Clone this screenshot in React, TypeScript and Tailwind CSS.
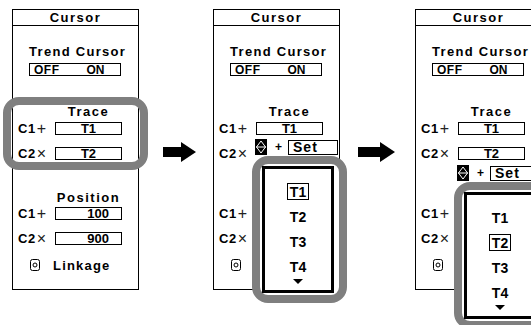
import React from 'react';

type Variant = 1 | 2 | 3;

function Arrow({ width }: { width: number }) {
  const neck = width - 15;
  return (
    <svg width={width} height={20} viewBox={`0 0 ${width} 20`} className="shrink-0">
      <polygon points={`0,5 ${neck},5 ${neck},0 ${width},10 ${neck},20 ${neck},15 0,15`} fill="#000" />
    </svg>
  );
}

function Spinner() {
  return (
    <svg width={12} height={16} viewBox="0 0 12 16" className="shrink-0">
      <rect x={0} y={0} width={12} height={16} fill="#000" />
      <polygon points="6,2 10.5,8 6,14 1.5,8" fill="none" stroke="#fff" strokeWidth={1} />
      <line x1={1} y1={8} x2={11} y2={8} stroke="#fff" strokeWidth={1} />
    </svg>
  );
}

function LinkIcon() {
  return (
    <svg width={10} height={12} viewBox="0 0 10 12" className="shrink-0">
      <rect x={0.5} y={0.5} width={9} height={11} rx={2} fill="none" stroke="#000" />
      <circle cx={5} cy={6} r={2} fill="none" stroke="#000" />
    </svg>
  );
}

function SectionLabel({ children, className }: { children: React.ReactNode; className: string }) {
  return (
    <div className={`ml-[42px] w-[67px] h-[14px] text-center text-[13px] font-bold tracking-[1.5px] leading-[14px] whitespace-nowrap ${className}`}>
      {children}
    </div>
  );
}

function Row({
  name,
  mark,
  value,
  right,
  hideBox,
  className,
}: {
  name: string;
  mark: string;
  value: string;
  right?: boolean;
  hideBox?: boolean;
  className: string;
}) {
  return (
    <div className={`flex items-center h-[13px] pl-[5px] ${className}`}>
      <div className="w-[37px] flex items-center leading-none whitespace-nowrap">
        <span className="text-[13px] font-bold tracking-[0.5px]">{name}</span>
        <span className="ml-[1px] text-[16px] font-light text-[#222]">{mark}</span>
      </div>
      {!hideBox && (
        <div
          className={`w-[67px] h-[13px] border border-black flex items-center text-[13px] font-bold leading-none ${
            right ? 'justify-end pr-[12px]' : 'justify-center'
          }`}
        >
          {value}
        </div>
      )}
    </div>
  );
}

function SetRow({ top }: { top: string }) {
  return (
    <div className={`absolute left-[41px] ${top} flex items-center z-10`}>
      <Spinner />
      <span className="ml-[8px] text-[12px] font-bold leading-none">+</span>
      <div className="ml-[6px] w-[50px] h-[15px] border border-black bg-white flex items-center pl-[4px] text-[14px] font-bold tracking-[1px] leading-none">
        Set
      </div>
    </div>
  );
}

function TraceList({ top, selected }: { top: string; selected: number }) {
  return (
    <div
      className={`absolute left-[38px] ${top} w-[95px] h-[147px] border-[8px] border-[#7f7f7f] rounded-[16px] bg-white p-[2px] z-20`}
    >
      <div className="h-full w-[72px] border-[3px] border-black flex flex-col items-center pt-[10px]">
        {['T1', 'T2', 'T3', 'T4'].map((t, i) => (
          <div key={t} className="h-[25px] flex items-center justify-center">
            <span
              className={`h-[17px] flex items-center px-[2px] text-[14px] font-bold leading-none ${
                selected === i ? 'border border-black' : 'border border-transparent'
              }`}
            >
              {t}
            </span>
          </div>
        ))}
        <div className="w-0 h-0 border-l-[5px] border-r-[5px] border-t-[5px] border-l-transparent border-r-transparent border-t-black" />
      </div>
    </div>
  );
}

function Panel({ variant }: { variant: Variant }) {
  const covered = variant !== 1;
  return (
    <div className="relative w-[127px] h-[281px] shrink-0 border border-black bg-white flex flex-col">
      <div className="h-[16px] border-b border-black flex items-center justify-center text-[13px] font-bold tracking-[1.5px] leading-none">
        Cursor
      </div>
      <div className="mt-[19px] pl-[16px] text-[13px] font-bold tracking-[1.3px] leading-[14px] whitespace-nowrap">
        Trend Cursor
      </div>
      <div className="mt-[4px] ml-[16px] w-[92px] h-[13px] border border-black flex items-center text-[12px] font-bold leading-none">
        <span className="ml-[4px] tracking-[0.5px]">OFF</span>
        <span className="ml-[27px]">ON</span>
      </div>

      <SectionLabel className="mt-[29px]">Trace</SectionLabel>
      <Row className="mt-[3px]" name="C1" mark="+" value="T1" />
      <Row className="mt-[12px]" name="C2" mark="×" value="T2" hideBox={variant === 2} />

      {/* Position section: under the drop-down list in panels 2 and 3 */}
      <SectionLabel className="mt-[31px]">{covered ? '' : 'Position'}</SectionLabel>
      <Row className="mt-[2px]" name="C1" mark="+" value="100" right hideBox={covered} />
      <Row className="mt-[12px]" name="C2" mark="×" value="900" right hideBox={covered} />
      <div className="mt-[13px] h-[14px] ml-[17px] flex items-center">
        <LinkIcon />
        {!covered && (
          <span className="ml-[13px] text-[13px] font-bold tracking-[1.2px] leading-none">Linkage</span>
        )}
      </div>

      {variant === 1 && (
        <div className="absolute left-[-10px] top-[87px] w-[145px] h-[73px] border-[8px] border-[#7f7f7f] rounded-[16px]" />
      )}
      {variant === 2 && (
        <>
          <SetRow top="top-[129px]" />
          <TraceList top="top-[146px]" selected={0} />
        </>
      )}
      {variant === 3 && (
        <>
          <SetRow top="top-[155px]" />
          <TraceList top="top-[172px]" selected={1} />
        </>
      )}
    </div>
  );
}

export default function App() {
  return (
    <div className="w-[531px] h-[325px] overflow-hidden bg-white text-black font-['Liberation_Sans',Arial,sans-serif]">
      <div className="flex items-start pl-[12px] pt-[9px]">
        <Panel variant={1} />
        <div className="ml-[24px] mt-[133px]">
          <Arrow width={33} />
        </div>
        <div className="ml-[17px]">
          <Panel variant={2} />
        </div>
        <div className="ml-[18px] mt-[133px]">
          <Arrow width={37} />
        </div>
        <div className="ml-[20px]">
          <Panel variant={3} />
        </div>
      </div>
    </div>
  );
}
